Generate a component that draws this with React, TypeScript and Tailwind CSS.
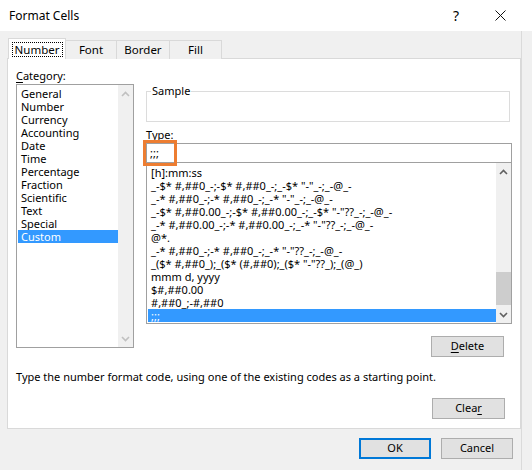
import React from "react";

const categories = [
  "General",
  "Number",
  "Currency",
  "Accounting",
  "Date",
  "Time",
  "Percentage",
  "Fraction",
  "Scientific",
  "Text",
  "Special",
  "Custom",
];

const formats = [
  "[h]:mm:ss",
  '_-$* #,##0_-;-$* #,##0_-;_-$* "-"_-;_-@_-',
  '_-* #,##0_-;-* #,##0_-;_-* "-"_-;_-@_-',
  '_-$* #,##0.00_-;-$* #,##0.00_-;_-$* "-"??_-;_-@_-',
  '_-* #,##0.00_-;-* #,##0.00_-;_-* "-"??_-;_-@_-',
  "@*.",
  '_-* #,##0_-;-* #,##0_-;_-* "-"??_-;_-@_-',
  '_($* #,##0_);_($* (#,##0);_($* "-"??_);_(@_)',
  "mmm d, yyyy",
  "$#,##0.00",
  "#,##0_;-#,##0",
  ";;;",
];

function Chevron({ up, className }: { up?: boolean; className?: string }) {
  return (
    <svg width="9" height="6" viewBox="0 0 9 6" className={className}>
      <path
        d={up ? "M1 5 L4.5 1.5 L8 5" : "M1 1 L4.5 4.5 L8 1"}
        fill="none"
        stroke="currentColor"
        strokeWidth="1.6"
      />
    </svg>
  );
}

function Scrollbar({ thumb }: { thumb?: boolean }) {
  return (
    <div className="flex flex-col w-[15px] h-full bg-[#f0f0f0] items-center">
      <div className="h-[17px] flex items-center justify-center text-[#606060] w-full">
        <Chevron up className={thumb ? "" : "text-[#c0c0c0]"} />
      </div>
      <div className="flex-1 w-full flex flex-col justify-end">
        {thumb && <div className="h-[33px] w-full bg-[#cdcdcd] mb-[1px]" />}
      </div>
      <div className="h-[17px] flex items-center justify-center text-[#606060] w-full">
        <Chevron className={thumb ? "" : "text-[#c0c0c0]"} />
      </div>
    </div>
  );
}

function Button({
  children,
  primary,
  className = "",
}: {
  children: React.ReactNode;
  primary?: boolean;
  className?: string;
}) {
  return (
    <div
      className={`h-[21px] flex items-center justify-center bg-[#e1e1e1] ${
        primary ? "border-2 border-[#0078d7]" : "border border-[#adadad]"
      } ${className}`}
    >
      {children}
    </div>
  );
}

export default function App() {
  return (
    <div
      className="w-[532px] h-[470px] bg-[#f0f0f0] text-[11px] text-black flex flex-col overflow-hidden relative"
      style={{ fontFamily: '"Noto Sans", "Open Sans", sans-serif' }}
    >
      {/* title bar */}
      <div className="h-[31px] bg-white flex items-center pl-[9px] shrink-0">
        <span className="flex-1 text-[12px]">Format Cells</span>
        <span className="w-[12px] text-center mr-[33px] text-[14px]">?</span>
        <svg width="11" height="11" viewBox="0 0 11 11" className="mr-[26px]">
          <path d="M0.5 0.5 L10.5 10.5 M10.5 0.5 L0.5 10.5" stroke="#111" strokeWidth="1" />
        </svg>
      </div>

      <div className="w-[522px] flex-1 flex flex-col border-r border-[#dadada]">
        {/* tabs */}
        <div className="flex items-end pl-[8px] mt-[7px] h-[21px] relative z-10 text-[11.5px]">
          <div className="w-[58px] h-[21px] bg-white border border-b-0 border-[#d9d9d9] flex items-center justify-center pt-[1px]">
            <div className="border border-dotted border-black h-[15px] w-[51px] flex items-center justify-center">
              Number
            </div>
          </div>
          <div className="w-[51px] h-[19px] bg-[#f0f0f0] border border-b-0 border-l-0 border-[#d9d9d9] flex items-center justify-center">
            Font
          </div>
          <div className="w-[53px] h-[19px] bg-[#f0f0f0] border border-b-0 border-l-0 border-[#d9d9d9] flex items-center justify-center">
            Border
          </div>
          <div className="w-[52px] h-[19px] bg-[#f0f0f0] border border-b-0 border-l-0 border-[#d9d9d9] flex items-center justify-center">
            Fill
          </div>
        </div>

        {/* panel */}
        <div className="ml-[7px] w-[514px] h-[371px] -mt-px bg-white border border-[#d9d9d9] flex flex-col px-[8px]">
          <div className="flex">
            {/* left column */}
            <div className="w-[119px] flex flex-col">
              <div className="h-[17px] mt-[8px] leading-[17px]">
                <span className="underline underline-offset-2">C</span>ategory:
              </div>
              <div className="h-[264px] border border-[#a0a0a0] flex">
                <div className="flex-1 flex flex-col pt-[2px] pl-[1px]">
                  {categories.map((c) => (
                    <div
                      key={c}
                      className={`h-[13px] leading-[13px] pl-[3px] ${
                        c === "Custom" ? "bg-[#3399ff] text-white" : ""
                      }`}
                    >
                      {c}
                    </div>
                  ))}
                </div>
                <Scrollbar />
              </div>
            </div>

            {/* right column */}
            <div className="ml-[12px] w-[369px] flex flex-col">
              <div className="mt-[32px] h-[31px] border border-[#dcdcdc] relative mr-[2px]">
                <span className="absolute left-[4px] -top-[9px] bg-white px-[1px] leading-[16px]">
                  Sample
                </span>
              </div>
              <div className="mt-[4px] h-[17px] leading-[17px]">
                <span className="underline underline-offset-2">T</span>ype:
              </div>
              <div className="h-[20px] border border-[#a0a0a0] relative">
                <div className="absolute -left-[4px] -top-[4px] w-[34px] h-[26px] border-[3px] border-[#ed7d31]" />
                <span className="pl-[3px] leading-[18px]">;;;</span>
              </div>
              <div className="h-[161px] border border-[#a0a0a0] border-t-0 flex">
                <div className="flex-1 flex flex-col pt-[3px] pl-[1px] overflow-hidden">
                  {formats.map((f) => (
                    <div
                      key={f}
                      className={`h-[13px] leading-[13px] pl-[3px] whitespace-pre ${
                        f === ";;;" ? "bg-[#3399ff] text-white" : ""
                      }`}
                    >
                      {f}
                    </div>
                  ))}
                </div>
                <Scrollbar thumb />
              </div>
              <div className="flex justify-end mt-[12px] mr-[8px]">
                <Button className="w-[73px]">
                  <span>
                    <span className="underline underline-offset-2">D</span>elete
                  </span>
                </Button>
              </div>
            </div>
          </div>

          <div className="mt-[11px] h-[17px] leading-[17px]">
            Type the number format code, using one of the existing codes as a starting point.
          </div>

          <div className="flex justify-end mt-[13px] mr-[7px]">
            <Button className="w-[73px]">
              <span>
                Clea<span className="underline underline-offset-2">r</span>
              </span>
            </Button>
          </div>
        </div>

        {/* footer */}
        <div className="flex justify-end mt-[9px] pr-[8px] gap-[10px]">
          <Button primary className="w-[72px]">OK</Button>
          <Button className="w-[72px]">Cancel</Button>
        </div>
      </div>
    </div>
  );
}
